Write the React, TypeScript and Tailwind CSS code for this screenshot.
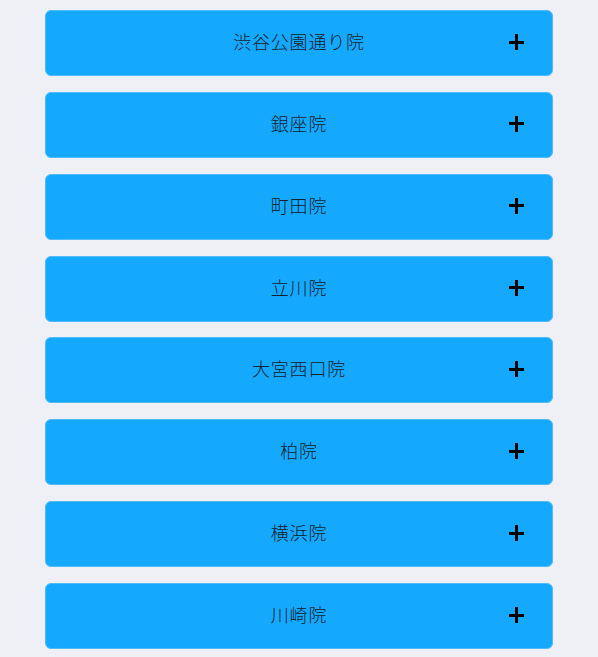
import React from "react";

const items = ["渋谷公園通り院", "銀座院", "町田院", "立川院", "大宮西口院", "柏院", "横浜院", "川崎院"];

export default function App() {
  return (
    <div className="min-h-[657px] bg-[#eff0f5] pt-[10px]" style={{ fontFamily: '"Noto Sans CJK JP", "Noto Sans", sans-serif' }}>
      <div className="mx-auto flex w-[508px] flex-col gap-[15.86px]">
        {items.map((t) => (
          <div
            key={t}
            className="relative flex h-[66px] items-center justify-center rounded-[6px] border border-[#4fbcf8] bg-[#14a9fd]"
          >
            <span className="pb-[4px] text-[18px] font-light leading-none tracking-[0.8px] text-[#14202c]">{t}</span>
            <span className="absolute right-[28px] top-1/2 mt-[-1px] h-[16px] w-[15px] -translate-y-1/2">
              <span className="absolute left-0 top-[6.5px] h-[3px] w-[15px] bg-black" />
              <span className="absolute left-[6px] top-0 h-[16px] w-[3px] bg-black" />
            </span>
          </div>
        ))}
      </div>
    </div>
  );
}
